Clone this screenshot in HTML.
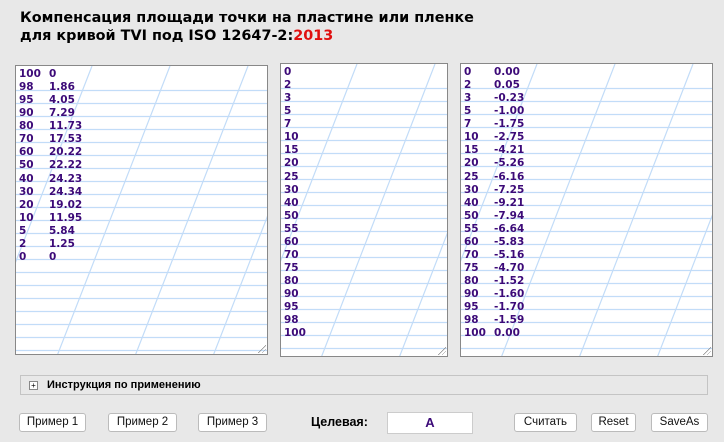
<!DOCTYPE html>
<html><head><meta charset="utf-8"><style>
body{margin:0;width:724px;height:442px;background:#e8e8e8;font-family:"DejaVu Sans","Liberation Sans",sans-serif;position:relative;overflow:hidden}
h1{position:absolute;left:20px;top:9px;margin:0;font-size:14.4px;line-height:18px;font-weight:bold;color:#000}
h1 span{color:#e01010}
.box{position:absolute;background:#fff;border:1px solid #888;overflow:hidden;box-sizing:border-box}
.box svg{position:absolute;left:0;top:0}
.t{position:absolute;left:3px;top:2px;font-family:"DejaVu Sans",sans-serif;font-weight:bold;font-size:10.5px;line-height:13.07px;color:#3c0a78;white-space:nowrap}
.t b{display:inline-block;width:30px;font-weight:bold}
.grip{position:absolute;right:1px;bottom:1px;width:8px;height:8px;background:linear-gradient(135deg,transparent 50%,#888 50%,#888 56%,transparent 56%,transparent 72%,#888 72%,#888 78%,transparent 78%)}
.bar{position:absolute;left:20px;top:375px;width:688px;height:20px;border:1px solid #c4c4c4;box-sizing:border-box;font-family:"Liberation Sans",sans-serif;font-weight:bold;font-size:11px;line-height:18px}
.bar i{position:absolute;left:8px;top:5px;width:7px;height:7px;border:1px solid #888;background:#fff;font-style:normal;font-size:8px;line-height:7px;text-align:center;font-weight:normal}
.btn{position:absolute;top:413px;height:19px;background:#fff;border:1px solid #bbb;border-radius:3px;box-sizing:border-box;font-family:"Liberation Sans",sans-serif;font-size:11.5px;line-height:17px;text-align:center;color:#111}
</style></head><body>
<h1>Компенсация площади точки на пластине или пленке<br>для кривой TVI под ISO 12647-2:<span>2013</span></h1>

<div class="box" style="left:15px;top:65px;width:253px;height:290px">
<svg width="253" height="290"><g stroke="#c2dcf8" stroke-width="1.2"><path d="M0 24.5H253M0 37.5H253M0 50.5H253M0 63.5H253M0 76.5H253M0 89.5H253M0 102.5H253M0 115.5H253M0 128.5H253M0 141.5H253M0 154.5H253M0 167.5H253M0 180.5H253M0 193.5H253M0 206.5H253M0 219.5H253M0 232.5H253M0 245.5H253M0 258.5H253M0 271.5H253M0 284.5H253"/><path d="M76 0L-37 290M154 0L41 290M232 0L119 290M310 0L197 290"/></g></svg>
<div class="t">
<div><b>100</b>0</div><div><b>98</b>1.86</div><div><b>95</b>4.05</div><div><b>90</b>7.29</div><div><b>80</b>11.73</div><div><b>70</b>17.53</div><div><b>60</b>20.22</div><div><b>50</b>22.22</div><div><b>40</b>24.23</div><div><b>30</b>24.34</div><div><b>20</b>19.02</div><div><b>10</b>11.95</div><div><b>5</b>5.84</div><div><b>2</b>1.25</div><div><b>0</b>0</div>
</div><div class="grip"></div></div>

<div class="box" style="left:280px;top:63px;width:168px;height:294px">
<svg width="168" height="294"><g stroke="#c2dcf8" stroke-width="1.2"><path d="M0 24.5H168M0 37.5H168M0 50.5H168M0 63.5H168M0 76.5H168M0 89.5H168M0 102.5H168M0 115.5H168M0 128.5H168M0 141.5H168M0 154.5H168M0 167.5H168M0 180.5H168M0 193.5H168M0 206.5H168M0 219.5H168M0 232.5H168M0 245.5H168M0 258.5H168M0 271.5H168M0 284.5H168"/><path d="M76 0L-38 294M154 0L40 294M232 0L118 294"/></g></svg>
<div class="t">
<div>0</div><div>2</div><div>3</div><div>5</div><div>7</div><div>10</div><div>15</div><div>20</div><div>25</div><div>30</div><div>40</div><div>50</div><div>55</div><div>60</div><div>70</div><div>75</div><div>80</div><div>90</div><div>95</div><div>98</div><div>100</div>
</div><div class="grip"></div></div>

<div class="box" style="left:460px;top:63px;width:253px;height:294px">
<svg width="253" height="294"><g stroke="#c2dcf8" stroke-width="1.2"><path d="M0 24.5H253M0 37.5H253M0 50.5H253M0 63.5H253M0 76.5H253M0 89.5H253M0 102.5H253M0 115.5H253M0 128.5H253M0 141.5H253M0 154.5H253M0 167.5H253M0 180.5H253M0 193.5H253M0 206.5H253M0 219.5H253M0 232.5H253M0 245.5H253M0 258.5H253M0 271.5H253M0 284.5H253"/><path d="M76 0L-38 294M154 0L40 294M232 0L118 294M310 0L196 294"/></g></svg>
<div class="t">
<div><b>0</b>0.00</div><div><b>2</b>0.05</div><div><b>3</b>-0.23</div><div><b>5</b>-1.00</div><div><b>7</b>-1.75</div><div><b>10</b>-2.75</div><div><b>15</b>-4.21</div><div><b>20</b>-5.26</div><div><b>25</b>-6.16</div><div><b>30</b>-7.25</div><div><b>40</b>-9.21</div><div><b>50</b>-7.94</div><div><b>55</b>-6.64</div><div><b>60</b>-5.83</div><div><b>70</b>-5.16</div><div><b>75</b>-4.70</div><div><b>80</b>-1.52</div><div><b>90</b>-1.60</div><div><b>95</b>-1.70</div><div><b>98</b>-1.59</div><div><b>100</b>0.00</div>
</div><div class="grip"></div></div>

<div class="bar"><i>+</i><span style="position:absolute;left:26px">Инструкция по применению</span></div>

<div class="btn" style="left:19px;width:67px">Пример 1</div>
<div class="btn" style="left:108px;width:69px">Пример 2</div>
<div class="btn" style="left:198px;width:69px">Пример 3</div>
<div style="position:absolute;left:311px;top:415px;font-family:'Liberation Sans',sans-serif;font-weight:bold;font-size:12.5px">Целевая:</div>
<div style="position:absolute;left:387px;top:412px;width:86px;height:22px;background:#fff;border:1px solid #ccc;box-sizing:border-box;text-align:center;font-family:'Liberation Sans',sans-serif;font-weight:bold;font-size:13px;line-height:20px;color:#3c0a78">A</div>
<div class="btn" style="left:514px;width:63px">Считать</div>
<div class="btn" style="left:591px;width:45px">Reset</div>
<div class="btn" style="left:651px;width:57px">SaveAs</div>
</body></html>
